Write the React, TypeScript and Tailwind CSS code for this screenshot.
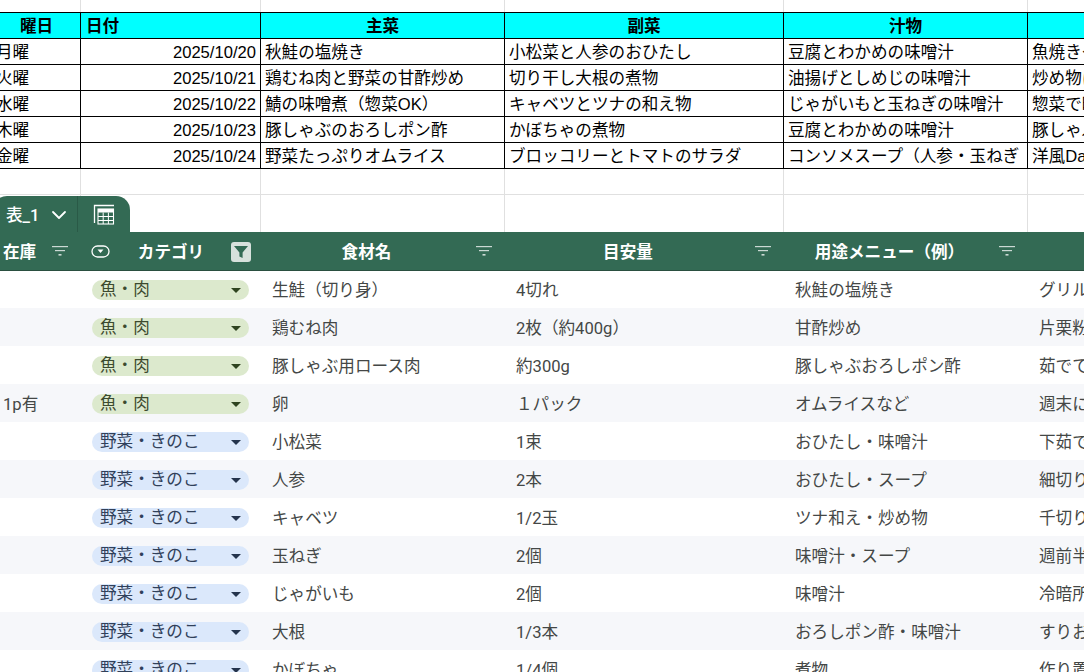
import { ChevronDown } from "lucide-react";

const cols = "grid grid-cols-[88px_180px_244px_279px_244px_100px]";

const menu = [
  ["月曜", "2025/10/20", "秋鮭の塩焼き", "小松菜と人参のおひたし", "豆腐とわかめの味噌汁", "魚焼きグリル"],
  ["火曜", "2025/10/21", "鶏むね肉と野菜の甘酢炒め", "切り干し大根の煮物", "油揚げとしめじの味噌汁", "炒め物に"],
  ["水曜", "2025/10/22", "鯖の味噌煮（惣菜OK）", "キャベツとツナの和え物", "じゃがいもと玉ねぎの味噌汁", "惣菜で時短"],
  ["木曜", "2025/10/23", "豚しゃぶのおろしポン酢", "かぼちゃの煮物", "豆腐とわかめの味噌汁", "豚しゃぶ"],
  ["金曜", "2025/10/24", "野菜たっぷりオムライス", "ブロッコリーとトマトのサラダ", "コンソメスープ（人参・玉ねぎ", "洋風Day"],
];

const items = [
  ["", "魚・肉", "生鮭（切り身）", "4切れ", "秋鮭の塩焼き", "グリル"],
  ["", "魚・肉", "鶏むね肉", "2枚（約400g）", "甘酢炒め", "片栗粉"],
  ["", "魚・肉", "豚しゃぶ用ロース肉", "約300g", "豚しゃぶおろしポン酢", "茹でて"],
  ["1p有", "魚・肉", "卵", "１パック", "オムライスなど", "週末に"],
  ["", "野菜・きのこ", "小松菜", "1束", "おひたし・味噌汁", "下茹で"],
  ["", "野菜・きのこ", "人参", "2本", "おひたし・スープ", "細切り"],
  ["", "野菜・きのこ", "キャベツ", "1/2玉", "ツナ和え・炒め物", "千切り"],
  ["", "野菜・きのこ", "玉ねぎ", "2個", "味噌汁・スープ", "週前半"],
  ["", "野菜・きのこ", "じゃがいも", "2個", "味噌汁", "冷暗所"],
  ["", "野菜・きのこ", "大根", "1/3本", "おろしポン酢・味噌汁", "すりお"],
  ["", "野菜・きのこ", "かぼちゃ", "1/4個", "煮物", "作り置"],
];

function FilterIcon() {
  return (
    <svg width="16" height="11" viewBox="0 0 16 11" className="shrink-0 text-white/75" fill="currentColor">
      <rect x="0" y="0" width="16" height="1.2" />
      <rect x="3" y="4" width="10" height="1.2" />
      <rect x="6.5" y="8" width="3" height="1.6" />
    </svg>
  );
}

function BlankRow({ className, children }: { className: string; children?: React.ReactNode }) {
  return (
    <div className={`${cols} relative ${className}`}>
      {[0, 1, 2, 3, 4, 5].map((i) => (
        <div key={i} className="border-r border-[#e0e0e0]" />
      ))}
      {children}
    </div>
  );
}

function Tab() {
  return (
    <div className="absolute left-0 top-[1px] flex h-[37px] w-[137px] items-center rounded-t-[14px] bg-[#336a54] font-['Roboto','Noto_Sans_CJK_JP',sans-serif] text-white">
      <div className="flex h-full w-[85px] items-center border-r border-[#2a5a47] pl-[13px]">
        <span className="pt-[4px] font-medium">表_1</span>
        <ChevronDown size={24} strokeWidth={1.8} className="ml-[8px] shrink-0" />
      </div>
      <svg width="22" height="22" viewBox="0 0 22 22" fill="none" stroke="currentColor" className="ml-[15px]">
        <path d="M1.5 19V1.5H21" strokeWidth="1.3" />
        <rect x="5" y="5" width="15.5" height="15" strokeWidth="1.1" />
        <rect x="5" y="5" width="15.5" height="3.5" fill="currentColor" stroke="none" />
        <path d="M5 12.5h15.5M5 16.5h15.5M10.2 8.5v11.5M15.4 8.5v11.5" strokeWidth="1" />
      </svg>
    </div>
  );
}

function HeaderCell({ label }: { label: string }) {
  return (
    <div className="relative flex items-center justify-center pr-[33px]">
      <span className="pt-[4px]">{label}</span>
      <span className="absolute right-[13px] flex items-center">
        <FilterIcon />
      </span>
    </div>
  );
}

export default function App() {
  return (
    <div className="h-[672px] w-[1084px] overflow-hidden bg-white font-['Liberation_Sans','Noto_Sans_CJK_JP',sans-serif] text-[16.6px]">
      <div className="-ml-[7px] w-[1135px]">
        <BlankRow className="h-[12px]" />

        <div className="border-t border-black text-black">
          <div className={`${cols} grid-rows-[26px] bg-[#00ffff] font-bold leading-[24px]`}>
            <div className="border-r border-b border-black pt-[2px] text-center">曜日</div>
            <div className="border-r border-b border-black pl-[5px] pt-[2px]">日付</div>
            <div className="border-r border-b border-black pt-[2px] text-center">主菜</div>
            <div className="border-r border-b border-black pt-[2px] text-center">副菜</div>
            <div className="border-r border-b border-black pt-[2px] text-center">汁物</div>
            <div className="border-r border-b border-black" />
          </div>
          {menu.map((row) => (
            <div key={row[1]} className={`${cols} grid-rows-[26px] leading-[24px]`}>
              <div className="border-r border-b border-black pl-[3px] pt-[2px]">{row[0]}</div>
              <div className="border-r border-b border-black pr-[4px] pt-[2px] text-right">{row[1]}</div>
              <div className="overflow-hidden whitespace-nowrap border-r border-b border-black pl-[4px] pt-[2px]">{row[2]}</div>
              <div className="overflow-hidden whitespace-nowrap border-r border-b border-black pl-[4px] pt-[2px]">{row[3]}</div>
              <div className="overflow-hidden whitespace-nowrap border-r border-b border-black pl-[4px] pt-[2px]">{row[4]}</div>
              <div className="overflow-hidden whitespace-nowrap border-b border-black pl-[4px] pt-[2px]">{row[5]}</div>
            </div>
          ))}
        </div>

        <BlankRow className="h-[26px] border-b border-[#e0e0e0]" />
        <BlankRow className="h-[37px]">
          <Tab />
        </BlankRow>

        <div className="font-['Roboto','Noto_Sans_CJK_JP',sans-serif]">
          <div className={`${cols} relative z-10 h-[38px] bg-[#336a54] pt-[1px] font-bold text-white shadow-[0_1px_0_#2a4f40]`}>
            <div className="relative flex items-center pl-[10px]">
              <span className="pt-[4px]">在庫</span>
              <span className="absolute right-[13px] flex items-center">
                <FilterIcon />
              </span>
            </div>
            <div className="relative flex items-center justify-center">
              <svg width="19" height="13" viewBox="0 0 19 13" fill="none" stroke="currentColor" className="absolute left-[10px]">
                <rect x="1" y="1" width="17" height="11" rx="5.5" strokeWidth="1.3" />
                <path d="M6.5 4.5h6L9.5 8z" fill="currentColor" stroke="none" />
              </svg>
              <span className="pt-[4px]">カテゴリ</span>
              <span className="absolute right-[10px] flex size-[20px] items-center justify-center rounded-[3px] bg-[#d7e1dc]">
                <svg width="14" height="14" viewBox="0 0 14 14" fill="#336a54">
                  <path d="M0 1h14L8.6 7.5V13L5.4 11.5V7.5z" />
                </svg>
              </span>
            </div>
            <HeaderCell label="食材名" />
            <HeaderCell label="目安量" />
            <HeaderCell label="用途メニュー（例）" />
            <div />
          </div>

          {items.map((row, i) => {
            const fish = row[1] === "魚・肉";
            return (
              <div key={row[2]} className={`${cols} h-[38px] items-center text-[#444746] ${i % 2 === 1 ? "bg-[#f6f7fa]" : "bg-white"}`}>
                <div className="pl-[10px] pt-[4px]">{row[0]}</div>
                <div className="pl-[11px] pr-[12px] pt-[2px]">
                  <div
                    className={`flex h-[20px] items-center justify-between rounded-full pl-[8px] pr-[8px] ${
                      fish ? "bg-[#dce9cd] text-[#3c4a2e]" : "bg-[#dbe8fb] text-[#30405a]"
                    }`}
                  >
                    <span className="pt-[1px]">{row[1]}</span>
                    <svg width="10" height="5" viewBox="0 0 10 5" fill="currentColor" className={fish ? "text-[#2f4420]" : "text-[#25344d]"}>
                      <path d="M0 0h10L5 5z" />
                    </svg>
                  </div>
                </div>
                <div className="pl-[11px] pt-[4px]">{row[2]}</div>
                <div className="pl-[11px] pt-[4px]">{row[3]}</div>
                <div className="pl-[11px] pt-[4px]">{row[4]}</div>
                <div className="pl-[11px] pt-[4px]">{row[5]}</div>
              </div>
            );
          })}
        </div>
      </div>
    </div>
  );
}
